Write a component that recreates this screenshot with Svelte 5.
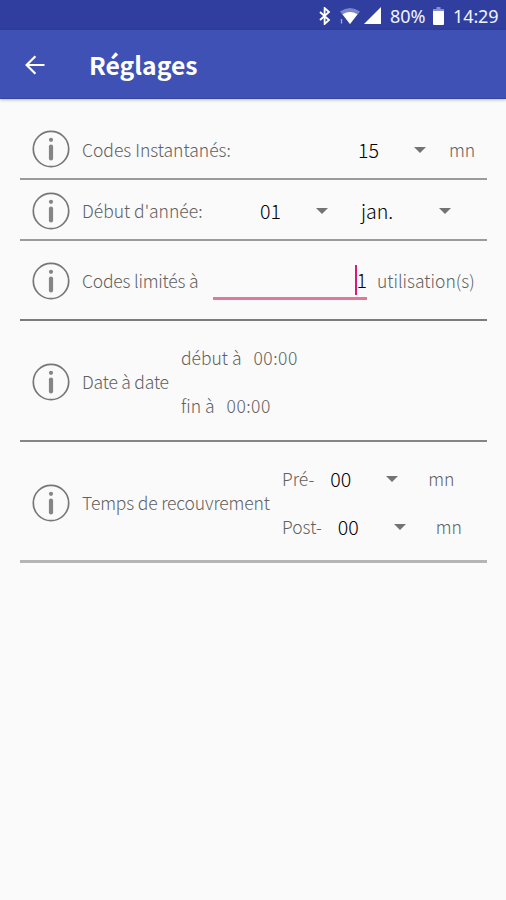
<script>
  const lead = ['Codes Instantanés:', "Début d'année:", 'Codes limités à', 'Date à date', 'Temps de recouvrement'];
</script>

{#snippet info(label, cls)}
  <svg class="info" viewBox="0 0 38 38" aria-hidden="true">
    <circle cx="19" cy="19" r="17.7" fill="none" stroke="#777" stroke-width="1.7" />
    <circle cx="19" cy="9.8" r="2.1" fill="#858585" />
    <path d="M19 16.6v11.8" stroke="#858585" stroke-width="4.2" stroke-linecap="round" />
  </svg>
  <span class="label {cls}">{label}</span>
{/snippet}

{#snippet caret()}
  <svg class="caret" viewBox="0 0 12 6" aria-hidden="true"><path d="M0 0h12L6 6z" fill="#737373" /></svg>
{/snippet}

<div class="screen">
  <div class="status">
    <svg class="bt" viewBox="0 0 12 18" aria-hidden="true">
      <path d="M1 5l9 8-4.4 4V1L10 5l-9 8" fill="none" stroke="#fff" stroke-width="1.8" />
    </svg>
    <svg class="wifi" viewBox="0 0 20 16" aria-hidden="true">
      <path d="M0 3.5Q10-3.5 20 3.5L10 16z" fill="#7c87c6" />
      <path d="M2.5 6.2Q10 1.8 17.5 6.2L10 16z" fill="#fff" />
      <path d="M1.5 11v4.5" stroke="#a4ace0" stroke-width="1.3" />
    </svg>
    <svg class="signal" viewBox="0 0 17 17" aria-hidden="true"><path d="M17 0v17H0z" fill="#fff" /></svg>
    <span class="battery-text">80%</span>
    <svg class="battery" viewBox="0 0 11 18" aria-hidden="true">
      <path d="M3.5 0h4v2H11v3H0V2h3.5z" fill="#8790cc" />
      <path d="M0 4h11v13q0 1-1 1H1q-1 0-1-1z" fill="#fff" />
    </svg>
    <span class="clock">14:29</span>
  </div>
  <header>
    <svg class="back" viewBox="0 0 20 20" aria-hidden="true">
      <path d="M19.5 10H2M10.4 1.2L1.6 10l8.8 8.8" fill="none" stroke="#fff" stroke-width="2.2" />
    </svg>
    <h1>Réglages</h1>
  </header>

  <main>
    <section class="r1">
      {@render info(lead[0], 'l1')}
      <span class="value v1">15</span>
      {@render caret()}
      <span class="unit u1">mn</span>
    </section>
    <section class="r2">
      {@render info(lead[1], 'l2')}
      <span class="value v2">01</span>
      {@render caret()}
      <span class="value month">jan.</span>
      {@render caret()}
    </section>
    <section class="r3">
      {@render info(lead[2], 'l3')}
      <div class="field"><i class="cursor"></i><span class="value">1</span></div>
      <span class="unit uses">utilisation(s)</span>
    </section>
    <section class="r4">
      {@render info(lead[3], 'l4')}
      <div class="stack">
        <div class="line"><span class="d1">début à</span><span class="time">00:00</span></div>
        <div class="line"><span class="d2">fin à</span><span class="time">00:00</span></div>
      </div>
    </section>
    <section class="r5">
      {@render info(lead[4], 'l5')}
      <div class="stack">
        <div class="line"><span class="p1">Pré-</span><span class="value v5">00</span>{@render caret()}<span class="unit u5">mn</span></div>
        <div class="line"><span class="p2">Post-</span><span class="value v5">00</span>{@render caret()}<span class="unit u5">mn</span></div>
      </div>
    </section>
  </main>
</div>

<style>
  :global(body) { background: #fafafa; }
  .screen {
    width: 506px; height: 900px; overflow: hidden; background: #fafafa;
    font-family: "Noto Sans CJK SC", "Noto Sans", sans-serif;
    font-size: 17.5px; font-weight: 300; line-height: 24px; color: #606060;
  }
  span { white-space: nowrap; }
  svg { display: block; flex: none; }
  .status {
    display: flex; align-items: center; height: 30px; padding-left: 319px; box-sizing: border-box;
    background: #303f9f; color: #f2f3ff; font-family: "Noto Sans", sans-serif; font-size: 18px; font-weight: 400;
  }
  .bt { width: 12px; height: 18px; margin-top: 2px; }
  .wifi { width: 20px; height: 16px; margin: 2px 0 0 9px; }
  .signal { width: 17px; height: 17px; margin: 1px 0 0 4px; }
  .battery-text { width: 37px; margin: 1px 0 0 9px; letter-spacing: -0.1px; }
  .battery { width: 11px; height: 18px; margin: 1px 0 0 6px; }
  .clock { margin: 1px 0 0 9px; letter-spacing: -0.1px; }
  header {
    display: flex; align-items: center; height: 69px; padding-left: 25px; box-sizing: border-box;
    background: #3f51b5; border-bottom: 1px solid #3445a0; box-shadow: 0 1px 3px #0004;
  }
  .back { width: 20px; height: 20px; margin-top: 1px; }
  h1 { margin: 0 0 1px 44px; font-size: 24.7px; line-height: 32px; font-weight: 700; color: #fff; }
  main { margin: 22px 19px 0 20px; }
  section { display: flex; align-items: center; box-sizing: border-box; padding: 2px 0 0 12px; border-bottom: 2px solid #9b9b9b; }
  .r1 { height: 59px; padding-top: 0; }
  .r2 { height: 61px; }
  .r3 { height: 80px; border-color: #7b7b7b; }
  .r4 { height: 121px; border-color: #858585; }
  .r5 { height: 121px; padding-top: 4px; border-bottom: 3px solid #b5b5b5; }
  .info { width: 38px; height: 38px; }
  .r1 .info { margin-bottom: 1px; }
  .label { margin-left: 12px; flex: none; }
  .l1 { width: 276px; }
  .l2 { width: 178px; }
  .l3 { width: 131px; letter-spacing: -0.2px; }
  .l4 { width: 99px; letter-spacing: -0.2px; }
  .l5 { width: 200px; letter-spacing: -0.15px; }
  .value { color: #000; font-size: 19.6px; }
  .v1, .v2 { width: 56px; }
  .month { width: 78px; margin-left: 33px; }
  .caret { width: 12px; height: 6px; }
  .unit { margin-left: 23px; }
  .field { display: flex; align-items: center; justify-content: flex-end; width: 154px; height: 38px; box-sizing: border-box; border-bottom: 3px solid #df7899; }
  .cursor { width: 2px; height: 30px; background: #d81b78; }
  .uses { margin-left: 10px; }
  .line { display: flex; align-items: center; height: 48px; }
  .time { margin-left: 12px; letter-spacing: 0.5px; }
  .v5 { width: 56px; margin-left: 16px; }
  .u5 { margin-left: 30px; }
</style>
